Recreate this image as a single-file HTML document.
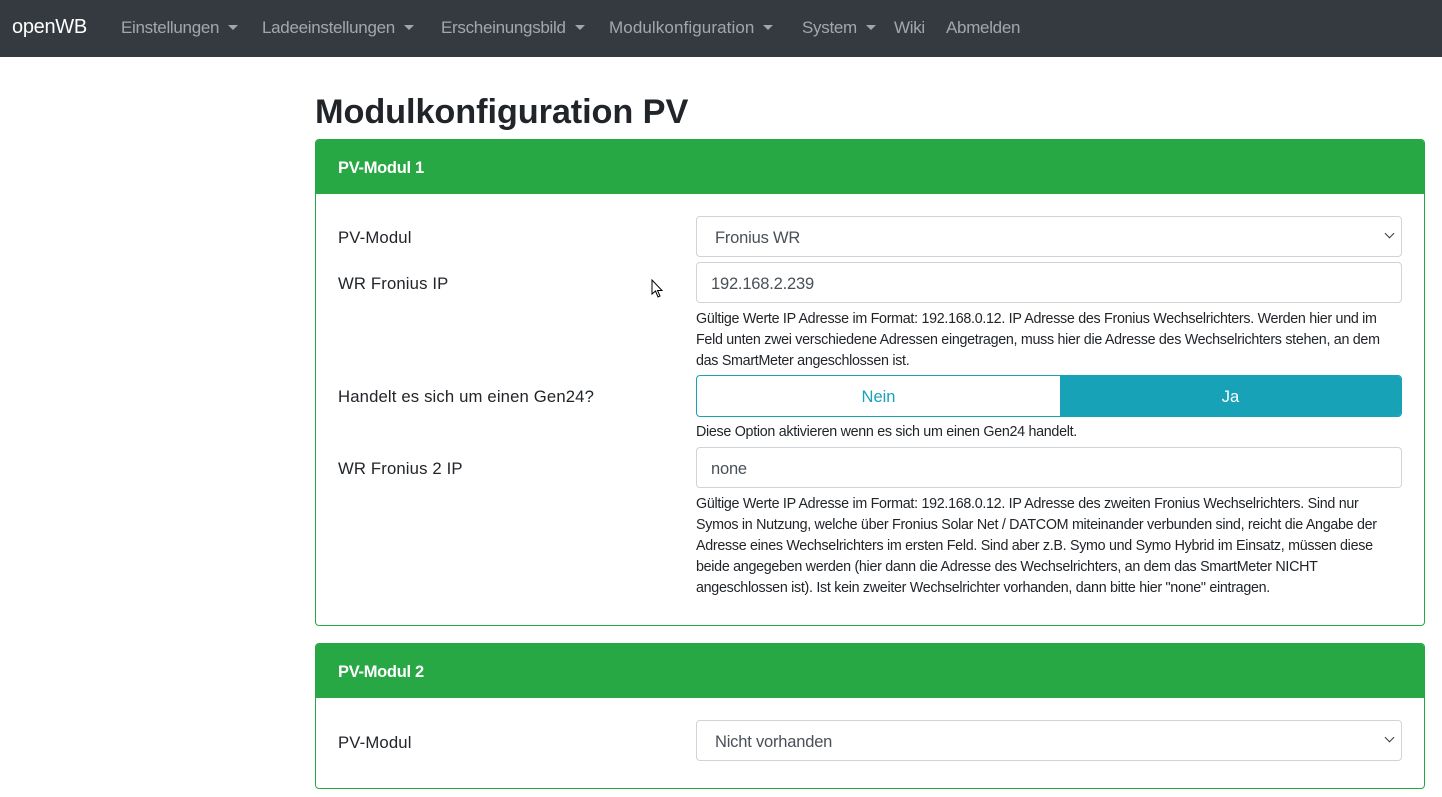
<!DOCTYPE html>
<html><head><meta charset="utf-8"><style>
*{box-sizing:border-box;margin:0;padding:0}
body{width:1442px;height:797px;overflow:hidden;background:#fff;font-family:"Liberation Sans",sans-serif;color:#212529;position:relative}
.nav{position:absolute;left:0;top:0;width:1442px;height:57px;background:#343a40}
.nav span{position:absolute;top:18px;font-size:17px;color:rgba(255,255,255,.55);letter-spacing:-0.3px;white-space:nowrap}
.nav .brand{color:#fff;font-size:20px;top:16px;left:12px}
.car{display:inline-block;width:0;height:0;border-left:5px solid transparent;border-right:5px solid transparent;border-top:5px solid rgba(255,255,255,.55);vertical-align:3px;margin-left:9px}
h1{position:absolute;left:315px;top:93px;font-size:34.3px;font-weight:bold;letter-spacing:-0.1px}
.card{position:absolute;left:315px;width:1110px;border:1px solid #28a745;border-radius:4px;overflow:hidden}
.ch{height:54px;background:#28a745;color:#fff;font-weight:bold;font-size:16.5px;padding:19px 22px;letter-spacing:-0.3px}
.a{position:absolute;white-space:nowrap}
.lbl{font-size:16.7px;color:#212529;letter-spacing:0.15px}
.inp{position:absolute;left:696px;width:706px;height:41px;border:1px solid #ced4da;border-radius:4px;font-size:16.5px;color:#495057;padding:12px 14px 0;letter-spacing:-0.2px}
.sm{position:absolute;left:696px;font-size:14.3px;line-height:21px;color:#212529;letter-spacing:-0.3px;white-space:nowrap}
.chev{position:absolute;right:8px;top:13px;width:7px;height:7px;border-right:1.8px solid #343a40;border-bottom:1.8px solid #343a40;transform:rotate(45deg)}
</style></head><body>
<div class="nav">
<span class="brand">openWB</span>
<span style="left:121px">Einstellungen<i class="car"></i></span>
<span style="left:262px">Ladeeinstellungen<i class="car"></i></span>
<span style="left:441px">Erscheinungsbild<i class="car"></i></span>
<span style="left:609px;letter-spacing:0.1px">Modulkonfiguration<i class="car"></i></span>
<span style="left:802px">System<i class="car"></i></span>
<span style="left:894px">Wiki</span>
<span style="left:946px">Abmelden</span>
</div>
<h1>Modulkonfiguration PV</h1>
<div class="card" style="top:139px;height:487px"><div class="ch">PV-Modul 1</div></div>
<div class="card" style="top:643px;height:146px"><div class="ch">PV-Modul 2</div></div>

<div class="a lbl" style="left:338px;top:228px">PV-Modul</div>
<div class="inp" style="top:216px;padding-left:18px">Fronius WR<i class="chev"></i></div>
<div class="a lbl" style="left:338px;top:274px">WR Fronius IP</div>
<div class="inp" style="top:262px">192.168.2.239</div>
<div class="sm" style="top:309px">Gültige Werte IP Adresse im Format: 192.168.0.12. IP Adresse des Fronius Wechselrichters. Werden hier und im<br>Feld unten zwei verschiedene Adressen eingetragen, muss hier die Adresse des Wechselrichters stehen, an dem<br>das SmartMeter angeschlossen ist.</div>
<div class="a lbl" style="left:338px;top:387px">Handelt es sich um einen Gen24?</div>
<div class="a" style="left:696px;top:375px;width:706px;height:42px;border:1px solid #17a2b8;border-radius:4px;overflow:hidden;display:flex;font-size:16.5px">
<div style="width:363px;text-align:center;padding-top:12px;color:#17a2b8">Nein</div>
<div style="flex:1;background:#17a2b8;color:#fff;text-align:center;padding-top:12px">Ja</div></div>
<div class="sm" style="top:422px">Diese Option aktivieren wenn es sich um einen Gen24 handelt.</div>
<div class="a lbl" style="left:338px;top:459px">WR Fronius 2 IP</div>
<div class="inp" style="top:447px">none</div>
<div class="sm" style="top:494px">Gültige Werte IP Adresse im Format: 192.168.0.12. IP Adresse des zweiten Fronius Wechselrichters. Sind nur<br>Symos in Nutzung, welche über Fronius Solar Net / DATCOM miteinander verbunden sind, reicht die Angabe der<br>Adresse eines Wechselrichters im ersten Feld. Sind aber z.B. Symo und Symo Hybrid im Einsatz, müssen diese<br>beide angegeben werden (hier dann die Adresse des Wechselrichters, an dem das SmartMeter NICHT<br>angeschlossen ist). Ist kein zweiter Wechselrichter vorhanden, dann bitte hier "none" eintragen.</div>

<div class="a lbl" style="left:338px;top:733px">PV-Modul</div>
<div class="inp" style="top:720px;padding-left:18px">Nicht vorhanden<i class="chev"></i></div>
<svg class="a" style="left:651px;top:279px" width="14" height="20" viewBox="0 0 14 20"><path d="M1 1 L1 15 L4.5 12 L7 18 L9 17 L6.5 11.5 L11 11.5 Z" fill="#fff" stroke="#000" stroke-width="1"/></svg>
</body></html>
